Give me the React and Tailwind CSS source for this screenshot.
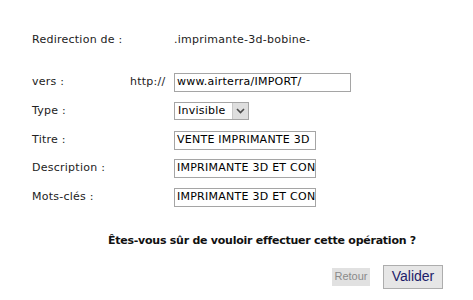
import React from "react";

const font = { fontFamily: '"DejaVu Sans", Verdana, sans-serif' };

function Box({ w, children }) {
  return (
    <div
      className={`${w} h-[19px] border border-[#a5a5a5] bg-white pl-[2px] flex items-center overflow-hidden whitespace-nowrap text-[11px] tracking-[0.25px] text-black`}
    >
      {children}
    </div>
  );
}

function Row({ label, mid, children, mt }) {
  return (
    <div className={`flex items-center h-[20px] ${mt}`}>
      <div className="w-[98px] text-[11px] tracking-[0.25px] text-[#222]">{label}</div>
      <div className="w-[44px] text-[11px] tracking-[0.25px] text-[#222] text-right pr-[9px] whitespace-nowrap">{mid}</div>
      <div className="flex items-center">{children}</div>
    </div>
  );
}

export default function App() {
  return (
    <div className="w-[473px] h-[300px] bg-white relative overflow-hidden" style={font}>
      <div className="pl-[32px] pt-[30px]">
        <Row label="Redirection de :" mid="" mt="">
          <span className="text-[11px] tracking-[0.25px] text-[#222]">.imprimante-3d-bobine-</span>
        </Row>
        <Row label="vers :" mid="http://" mt="mt-[22px]">
          <Box w="w-[177px]">www.airterra/IMPORT/</Box>
        </Row>
        <Row label="Type :" mid="" mt="mt-[9px]">
          <div className="w-[75px] h-[18px] border border-[#a5a5a5] bg-white flex items-stretch">
            <div className="flex-1 pl-[3px] flex items-center text-[11px] tracking-[0.25px] text-black">Invisible</div>
            <div className="w-[16px] bg-[#dedede] border-l border-[#c8c8c8] flex items-center justify-center">
              <svg width="9" height="6" viewBox="0 0 9 6">
                <path d="M1 1 L4.5 4.5 L8 1" stroke="#4a4a4a" strokeWidth="1.6" fill="none" />
              </svg>
            </div>
          </div>
        </Row>
        <Row label="Titre :" mid="" mt="mt-[9px]">
          <Box w="w-[142px]">VENTE IMPRIMANTE 3D</Box>
        </Row>
        <Row label="Description :" mid="" mt="mt-[8px]">
          <Box w="w-[142px]">IMPRIMANTE 3D ET CONSOMMABLES</Box>
        </Row>
        <Row label="Mots-clés :" mid="" mt="mt-[9px]">
          <Box w="w-[142px]">IMPRIMANTE 3D ET CONSOMMABLES</Box>
        </Row>
      </div>
      <div className="pl-[51px] mt-[26px] text-center text-[11px] font-bold tracking-[-0.25px] text-[#111]">
        Êtes-vous sûr de vouloir effectuer cette opération ?
      </div>
      <div className="flex justify-end items-center pr-[30px] mt-[15px]" style={{ fontFamily: '"Liberation Sans", Arial, sans-serif' }}>
        <div className="w-[38px] h-[18px] bg-[#e1e1e1] text-[#8a8a8a] text-[11px] flex items-center justify-center">
          Retour
        </div>
        <div className="ml-[13px] w-[60px] h-[24px] bg-[#e6e6e6] border border-[#adadad] text-[#1c1c6a] text-[14px] flex items-center justify-center">
          Valider
        </div>
      </div>
    </div>
  );
}
